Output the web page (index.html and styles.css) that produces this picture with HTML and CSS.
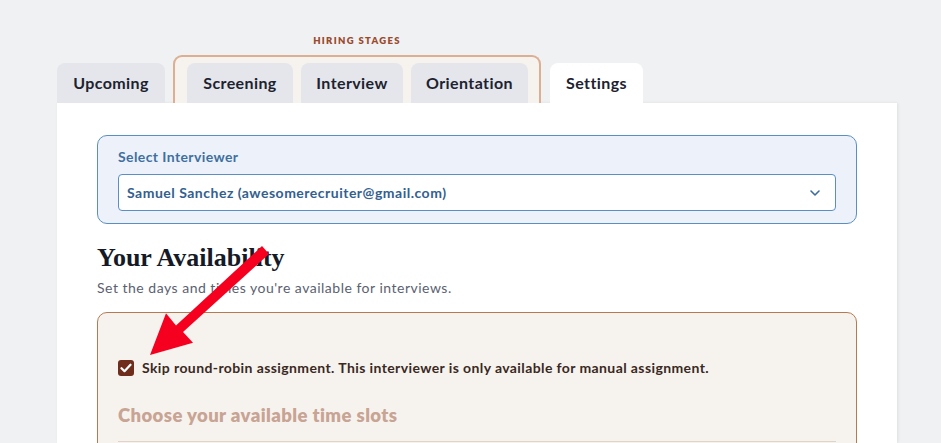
FILE: index.html
```html
<!DOCTYPE html>
<html lang="en">
<head>
<meta charset="utf-8">
<title>Interviewer Settings</title>
<link rel="stylesheet" href="styles.css">
</head>
<body>
<div class="page">
  <nav class="tabs">
    <div class="tab">Upcoming</div>
    <div class="stage-group">
      <div class="stage-label">HIRING STAGES</div>
      <div class="stage-box">
        <div class="tab">Screening</div>
        <div class="tab">Interview</div>
        <div class="tab">Orientation</div>
      </div>
    </div>
    <div class="tab tab-active">Settings</div>
  </nav>

  <main class="panel">
    <section class="picker">
      <label class="picker-label">Select Interviewer</label>
      <div class="select">
        <span>Samuel Sanchez (awesomerecruiter@gmail.com)</span>
        <svg class="chevron" width="12" height="8" viewBox="0 0 12 8"><path d="M2 2l4 4 4-4" fill="none" stroke="#3d6c9c" stroke-width="1.6" stroke-linecap="round" stroke-linejoin="round"/></svg>
      </div>
    </section>

    <h1 class="title">Your Availability</h1>
    <p class="subtitle">Set the days and times you're available for interviews.</p>

    <section class="avail">
      <label class="skip">
        <span class="checkbox">
          <svg width="12" height="10" viewBox="0 0 12 10"><path d="M1.5 5.2l3 3 6-6.5" fill="none" stroke="#fff" stroke-width="2.2" stroke-linecap="round" stroke-linejoin="round"/></svg>
        </span>
        Skip round-robin assignment. This interviewer is only available for manual assignment.
      </label>
      <h2 class="slots">Choose your available time slots</h2>
      <div class="rule"></div>
    </section>
  </main>

  <svg class="arrow" width="941" height="443" viewBox="0 0 941 443">
    <polygon points="269,254 262,246 176,325.5 166,313.2 150,355 193,342.8 183,332" fill="#f5001f"/>
  </svg>
</div>
</body>
</html>
```
FILE: styles.css
```css
* { box-sizing: border-box; margin: 0; padding: 0; }

html, body {
  background: #f0f1f3;
  font-family: Lato, "Noto Sans", sans-serif;
  letter-spacing: 0.4px;
  overflow: hidden;
}

.page {
  position: relative;
  width: 941px;
  height: 443px;
  padding-left: 57px;
  overflow: hidden;
}

.tabs {
  display: flex;
  align-items: flex-end;
  height: 103px;
}

.tab {
  height: 40px;
  padding: 0 12px 1px;
  display: flex;
  align-items: center;
  justify-content: center;
  background: #e4e6eb;
  border-radius: 8px 8px 0 0;
  font-size: 16px;
  font-weight: 700;
  color: #1d2230;
}

.tabs > .tab:first-child { width: 108px; }

.stage-group {
  margin-left: 8px;
  display: flex;
  flex-direction: column;
  align-items: center;
}

.stage-label {
  font-size: 9.5px;
  font-weight: 800;
  letter-spacing: 0.14em;
  color: #9a4a2d;
  margin-bottom: 9px;
}

.stage-box {
  display: flex;
  gap: 8px;
  width: 368px;
  padding: 6px 11px 0 12px;
  background: #f6f3ef;
  border: 2px solid #dcae92;
  border-bottom: none;
  border-radius: 9px 9px 0 0;
}

.stage-box .tab:nth-child(1) { width: 106px; }
.stage-box .tab:nth-child(2) { width: 102px; }
.stage-box .tab:nth-child(3) { width: 117px; }

.tab-active {
  margin-left: 9px;
  width: 93px;
  background: #fff;
}

.panel {
  width: 840px;
  height: 340px;
  background: #fff;
  padding: 32px 40px 0;
  box-shadow: 1px 0 3px rgba(0, 0, 0, 0.08);
}

.picker {
  background: #edf2fa;
  border: 1px solid #5b8fc3;
  border-radius: 10px;
  padding: 11px 20px 12px 20px;
}

.picker-label {
  display: block;
  font-size: 14px;
  font-weight: 700;
  color: #3f6f9f;
  line-height: 20px;
  margin-bottom: 7px;
}

.select {
  height: 37px;
  background: #fff;
  border: 1px solid #5b8fc3;
  border-radius: 4px;
  display: flex;
  align-items: center;
  justify-content: space-between;
  padding: 0 14px 0 8px;
  font-size: 14px;
  font-weight: 700;
  letter-spacing: 0.5px;
  color: #32608f;
}

.title {
  margin-top: 17px;
  font-family: "Liberation Serif", serif;
  font-size: 26px;
  font-weight: 700;
  letter-spacing: 0;
  color: #151a27;
  line-height: 34px;
}

.subtitle {
  margin-top: 4px;
  font-size: 14px;
  letter-spacing: 0.5px;
  color: #5b6170;
  line-height: 18px;
}

.avail {
  margin-top: 15px;
  height: 200px;
  background: #f6f3ef;
  border: 1px solid #b67a52;
  border-radius: 10px;
  padding: 46px 20px 0 20px;
}

.skip {
  display: flex;
  align-items: center;
  gap: 8px;
  font-size: 14px;
  font-weight: 700;
  color: #3a2822;
  line-height: 18px;
}

.checkbox {
  width: 16px;
  height: 16px;
  border-radius: 3px;
  background: #6e2e1b;
  display: flex;
  align-items: center;
  justify-content: center;
}

.slots {
  margin-top: 26px;
  font-size: 18.5px;
  font-weight: 800;
  color: #c8a494;
  line-height: 24px;
}

.rule {
  margin-top: 14px;
  border-top: 1px solid #e2d3c8;
}

.arrow {
  position: absolute;
  left: 0;
  top: 0;
  pointer-events: none;
}
```
